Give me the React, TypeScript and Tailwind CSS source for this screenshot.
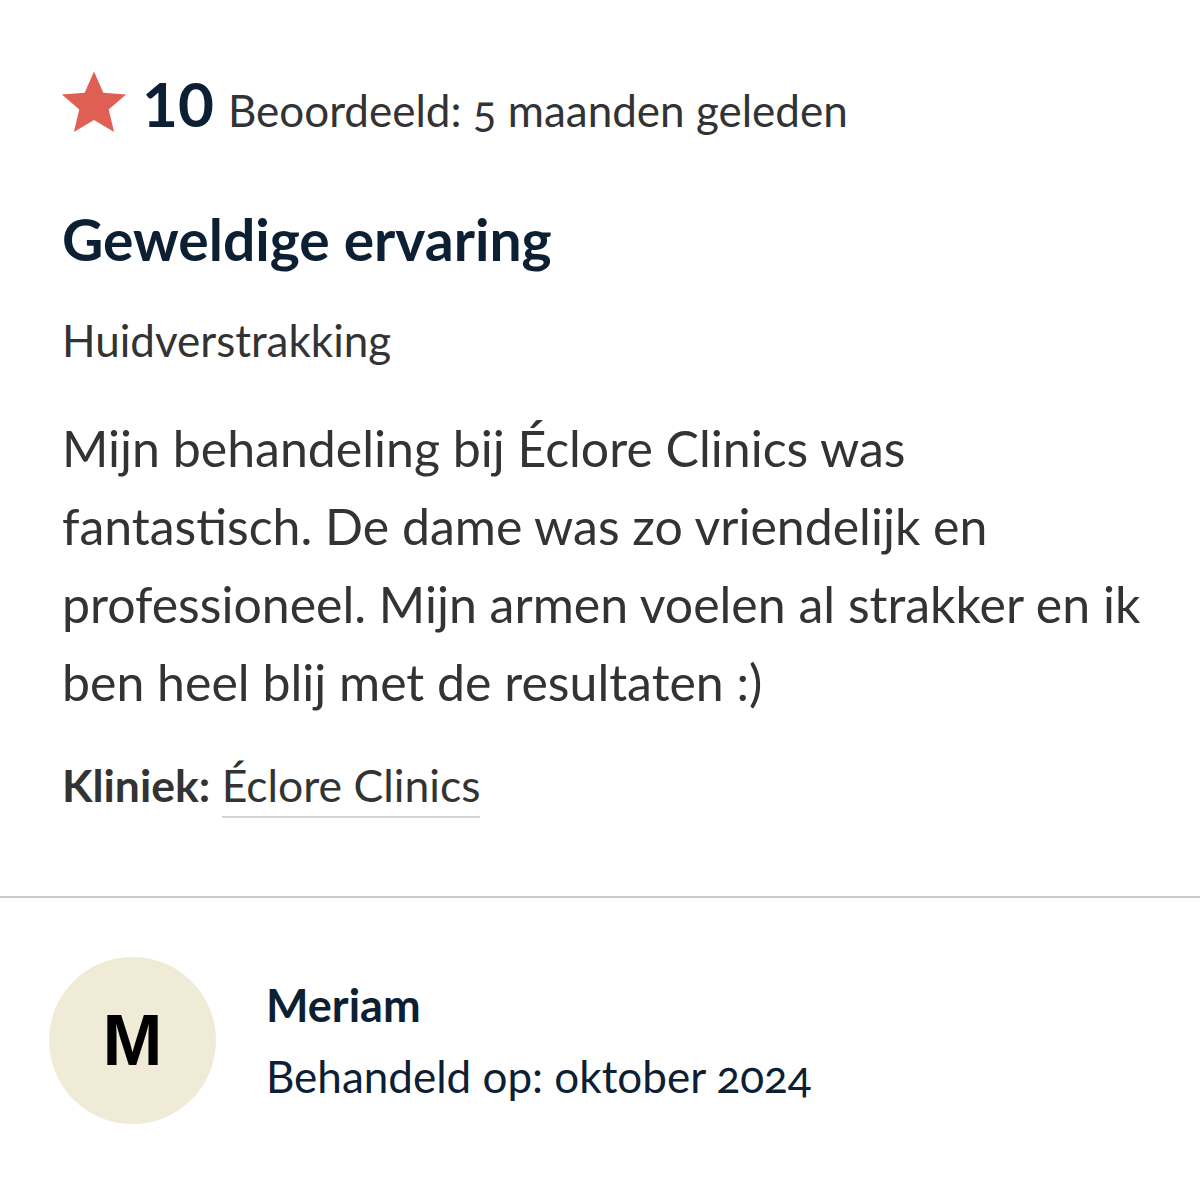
export default function App() {
  return (
    <main
      className="min-h-screen bg-white [font-feature-settings:'onum']"
      style={{ fontFamily: "Lato, 'Noto Sans', sans-serif" }}
    >
      <section className="pl-[62px] pr-[30px] pt-[67px] pb-[78px]">
        <div className="flex items-center">
          <svg width="72" height="72" viewBox="0 0 24 24" className="-ml-[4px] mr-[12px]">
            <path
              d="M12 1.5l3.1 7.1 7.6.6-5.8 5 1.8 7.5L12 17.7l-6.7 4 1.8-7.5-5.8-5 7.6-.6z"
              fill="#df5f55"
            />
          </svg>
          <div className="flex items-baseline">
            <span className="text-[62px] font-bold leading-none text-[#0d2033] mr-[14px] [font-feature-settings:'lnum']">
              10
            </span>
            <span className="text-[44px] leading-none text-[#333333]">
              Beoordeeld: 5 maanden geleden
            </span>
          </div>
        </div>

        <h2 className="mt-[72px] text-[57px] font-bold leading-none text-[#0d2033]">
          Geweldige ervaring
        </h2>

        <p className="mt-[50px] text-[44px] leading-none text-[#333333]">Huidverstrakking</p>

        <p className="mt-[47px] text-[50px] leading-[78px] text-[#333333] max-w-[1095px]">
          Mijn behandeling bij Éclore Clinics was fantastisch. De dame was zo vriendelijk en
          professioneel. Mijn armen voelen al strakker en ik ben heel blij met de resultaten :)
        </p>

        <p className="mt-[42px] text-[44.5px] leading-none text-[#333333]">
          <span className="font-bold">Kliniek:</span>{" "}
          <span className="inline-block border-b-2 border-[#d4d4d4] pb-[8px]">Éclore Clinics</span>
        </p>
      </section>

      <hr className="border-0 border-t-2 border-[#cccccc]" />

      <section className="flex items-center px-[49px] pt-[59px]">
        <div className="flex h-[167px] w-[167px] shrink-0 items-center justify-center rounded-full bg-[#efebd6]">
          <span
            className="text-[72px] font-bold leading-none text-black"
            style={{ fontFamily: "'Liberation Sans', Arial, sans-serif" }}
          >
            M
          </span>
        </div>
        <div className="ml-[50px] flex flex-col">
          <span className="text-[45px] font-bold leading-none text-[#0d2033]">Meriam</span>
          <span className="mt-[26px] text-[44px] leading-none text-[#0d2033]">
            Behandeld op: oktober 2024
          </span>
        </div>
      </section>
    </main>
  );
}
